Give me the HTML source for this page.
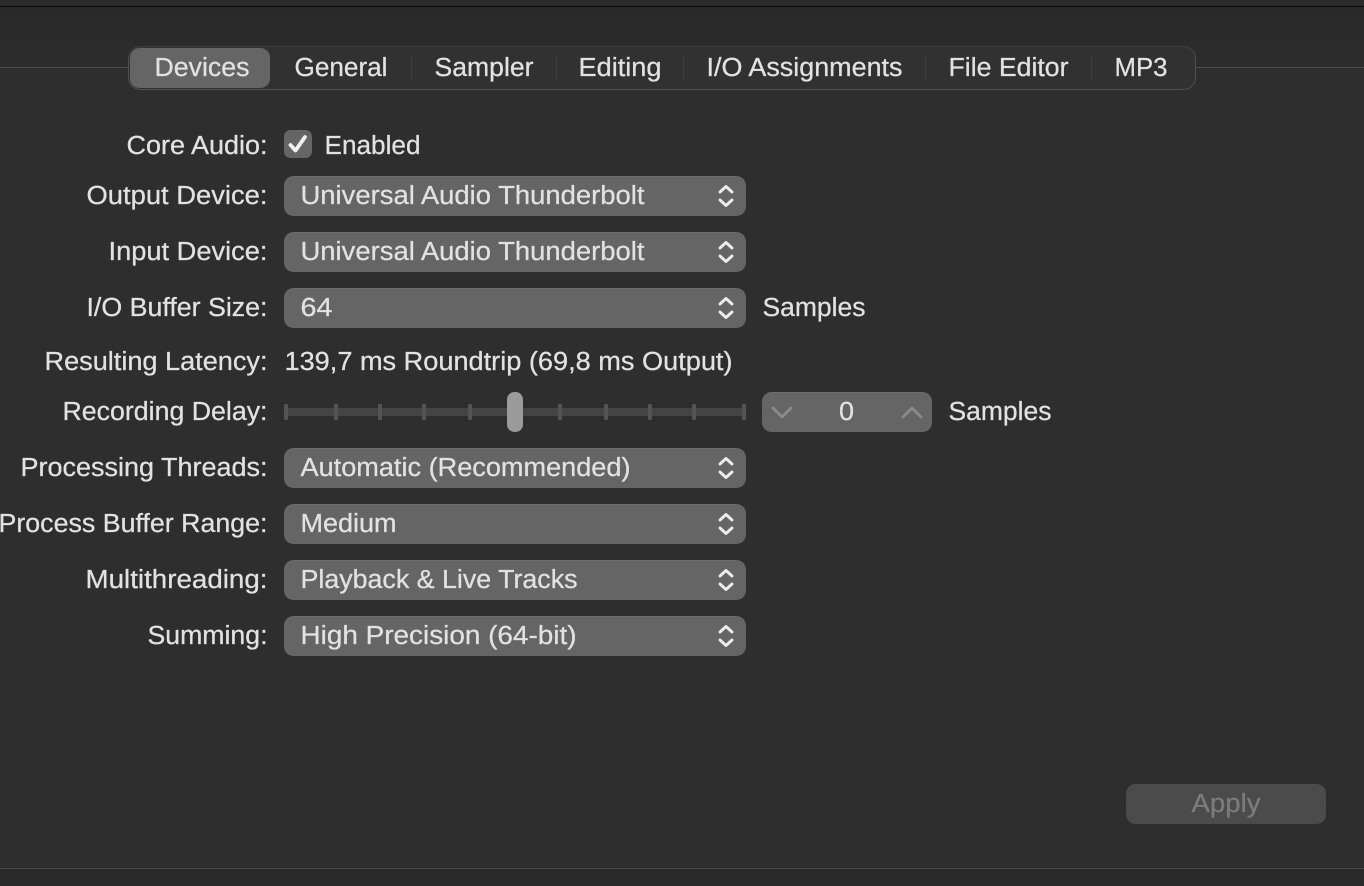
<!DOCTYPE html>
<html><head><meta charset="utf-8"><style>
html,body{margin:0;padding:0;background:#2e2e2e;width:1364px;height:886px;overflow:hidden}
svg{display:block}
text{font-family:"Liberation Sans",sans-serif;font-size:25.5px;fill:#e2e2e2;stroke:#e2e2e2;stroke-width:.25px}
.c{fill:none;stroke:#ececec;stroke-width:2.900;stroke-linecap:round;stroke-linejoin:round}
.t{fill:#707070}
</style></head><body>
<svg width="1364" height="886" viewBox="0 0 1364 886" xmlns="http://www.w3.org/2000/svg">
<defs>
<linearGradient id="hd" x1="0" y1="0" x2="0" y2="1"><stop offset="0" stop-color="#292929"/><stop offset="1" stop-color="#2d2d2d"/></linearGradient>
<g id="ud"><path class="c" d="M720 192l6-5.500 6 5.500"/><path class="c" d="M720 200l6 5.500 6-5.500"/></g>
</defs>
<rect width="1364" height="886" fill="#2e2e2e"/>
<rect width="1364" height="6" fill="#2c2c2c"/>
<rect y="6" width="1364" height="1" fill="#0c0c0c"/>
<rect y="7" width="1364" height="60" fill="url(#hd)"/>
<rect y="67" width="1364" height="1" fill="#4a4a4a"/>
<rect y="868" width="1364" height="1" fill="#4a4a4a"/>
<rect y="869" width="1364" height="17" fill="#2a2a2a"/>

<rect x="128.500" y="46.500" width="1067" height="43" rx="12" fill="#313131" stroke="#505050"/>
<path d="M129 58a11.500 11.500 0 0 1 11-11.500H1184a11.500 11.500 0 0 1 11 11.500" fill="none" stroke="#3c3c3c"/>
<rect x="130" y="48" width="140" height="40" rx="9.500" fill="#656565"/>
<rect x="411" y="56" width="1" height="24" fill="#3d3d3d"/>
<rect x="556" y="56" width="1" height="24" fill="#3d3d3d"/>
<rect x="683" y="56" width="1" height="24" fill="#3d3d3d"/>
<rect x="925" y="56" width="1" height="24" fill="#3d3d3d"/>
<rect x="1091" y="56" width="1" height="24" fill="#3d3d3d"/>

<text x="154.500" y="76" textLength="95" lengthAdjust="spacingAndGlyphs">Devices</text>
<text x="294.500" y="76" textLength="93" lengthAdjust="spacingAndGlyphs">General</text>
<text x="434.500" y="76" textLength="99" lengthAdjust="spacingAndGlyphs">Sampler</text>
<text x="578.500" y="76" textLength="83" lengthAdjust="spacingAndGlyphs">Editing</text>
<text x="706.500" y="76" textLength="196" lengthAdjust="spacingAndGlyphs">I/O Assignments</text>
<text x="948.500" y="76" textLength="120" lengthAdjust="spacingAndGlyphs">File Editor</text>
<text x="1114.500" y="76" textLength="53" lengthAdjust="spacingAndGlyphs">MP3</text>

<text x="126.500" y="154" textLength="141" lengthAdjust="spacingAndGlyphs">Core Audio:</text>
<text x="86.500" y="204" textLength="181" lengthAdjust="spacingAndGlyphs">Output Device:</text>
<text x="108.500" y="260" textLength="159" lengthAdjust="spacingAndGlyphs">Input Device:</text>
<text x="86.500" y="316" textLength="181" lengthAdjust="spacingAndGlyphs">I/O Buffer Size:</text>
<text x="44.500" y="370" textLength="223" lengthAdjust="spacingAndGlyphs">Resulting Latency:</text>
<text x="62.500" y="420" textLength="205" lengthAdjust="spacingAndGlyphs">Recording Delay:</text>
<text x="20.500" y="476" textLength="247" lengthAdjust="spacingAndGlyphs">Processing Threads:</text>
<text x="-1.500" y="532" textLength="269" lengthAdjust="spacingAndGlyphs">Process Buffer Range:</text>
<text x="85.500" y="588" textLength="182" lengthAdjust="spacingAndGlyphs">Multithreading:</text>
<text x="147.500" y="644" textLength="120" lengthAdjust="spacingAndGlyphs">Summing:</text>

<rect x="284" y="130" width="28" height="28" rx="6.500" fill="#656565"/>
<path d="M290.500 145l5 5.500L305 137" fill="none" stroke="#f0f0f0" stroke-width="3.800" stroke-linecap="round" stroke-linejoin="round"/>
<text x="324.500" y="154" textLength="96" lengthAdjust="spacingAndGlyphs">Enabled</text>

<rect x="284" y="176" width="462" height="40" rx="9.500" fill="#656565"/>
<rect class="t" x="294" y="176" width="442" height="1"/>
<text x="300.500" y="204" textLength="344" lengthAdjust="spacingAndGlyphs">Universal Audio Thunderbolt</text>
<use href="#ud"/>

<rect x="284" y="232" width="462" height="40" rx="9.500" fill="#656565"/>
<rect class="t" x="294" y="232" width="442" height="1"/>
<text x="300.500" y="260" textLength="344" lengthAdjust="spacingAndGlyphs">Universal Audio Thunderbolt</text>
<use href="#ud" y="56"/>

<rect x="284" y="288" width="462" height="40" rx="9.500" fill="#656565"/>
<rect class="t" x="294" y="288" width="442" height="1"/>
<text x="300.500" y="316" textLength="32" lengthAdjust="spacingAndGlyphs">64</text>
<use href="#ud" y="112"/>
<text x="762.500" y="316" textLength="103" lengthAdjust="spacingAndGlyphs">Samples</text>

<text x="284.500" y="370" textLength="448" lengthAdjust="spacingAndGlyphs">139,7 ms Roundtrip (69,8 ms Output)</text>

<rect x="286" y="408" width="458" height="8" fill="#444444"/>
<g fill="#545454">
<rect x="284" y="404" width="4" height="16" rx="1.500"/>
<rect x="334" y="404" width="4" height="16" rx="1.500"/>
<rect x="378" y="404" width="4" height="16" rx="1.500"/>
<rect x="422" y="404" width="4" height="16" rx="1.500"/>
<rect x="468" y="404" width="4" height="16" rx="1.500"/>
<rect x="558" y="404" width="4" height="16" rx="1.500"/>
<rect x="604" y="404" width="4" height="16" rx="1.500"/>
<rect x="648" y="404" width="4" height="16" rx="1.500"/>
<rect x="692" y="404" width="4" height="16" rx="1.500"/>
<rect x="742" y="404" width="4" height="16" rx="1.500"/>
</g>
<rect x="507" y="392" width="16" height="40" rx="7.500" fill="#9b9b9b"/>

<rect x="762" y="392" width="170" height="40" rx="9.500" fill="#656565"/>
<rect class="t" x="772" y="392" width="150" height="1"/>
<path d="M773 408l9 9 9-9" fill="none" stroke="#8b8b8b" stroke-width="2.800" stroke-linecap="round" stroke-linejoin="round"/>
<path d="M903 417l9-9 9 9" fill="none" stroke="#8b8b8b" stroke-width="2.800" stroke-linecap="round" stroke-linejoin="round"/>
<text x="839" y="420" textLength="15" lengthAdjust="spacingAndGlyphs">0</text>
<text x="948.500" y="420" textLength="103" lengthAdjust="spacingAndGlyphs">Samples</text>

<rect x="284" y="448" width="462" height="40" rx="9.500" fill="#656565"/>
<rect class="t" x="294" y="448" width="442" height="1"/>
<text x="300.500" y="476" textLength="330" lengthAdjust="spacingAndGlyphs">Automatic (Recommended)</text>
<use href="#ud" y="272"/>

<rect x="284" y="504" width="462" height="40" rx="9.500" fill="#656565"/>
<rect class="t" x="294" y="504" width="442" height="1"/>
<text x="300.500" y="532" textLength="96" lengthAdjust="spacingAndGlyphs">Medium</text>
<use href="#ud" y="328"/>

<rect x="284" y="560" width="462" height="40" rx="9.500" fill="#656565"/>
<rect class="t" x="294" y="560" width="442" height="1"/>
<text x="300.500" y="588" textLength="277" lengthAdjust="spacingAndGlyphs">Playback &amp; Live Tracks</text>
<use href="#ud" y="384"/>

<rect x="284" y="616" width="462" height="40" rx="9.500" fill="#656565"/>
<rect class="t" x="294" y="616" width="442" height="1"/>
<text x="300.500" y="644" textLength="276" lengthAdjust="spacingAndGlyphs">High Precision (64-bit)</text>
<use href="#ud" y="440"/>

<rect x="1126" y="784" width="200" height="40" rx="9.500" fill="#4b4b4b"/>
<text x="1191.500" y="812" textLength="69" lengthAdjust="spacingAndGlyphs" style="fill:#7c7c7c;stroke:#7c7c7c">Apply</text>
</svg>
</body></html>
